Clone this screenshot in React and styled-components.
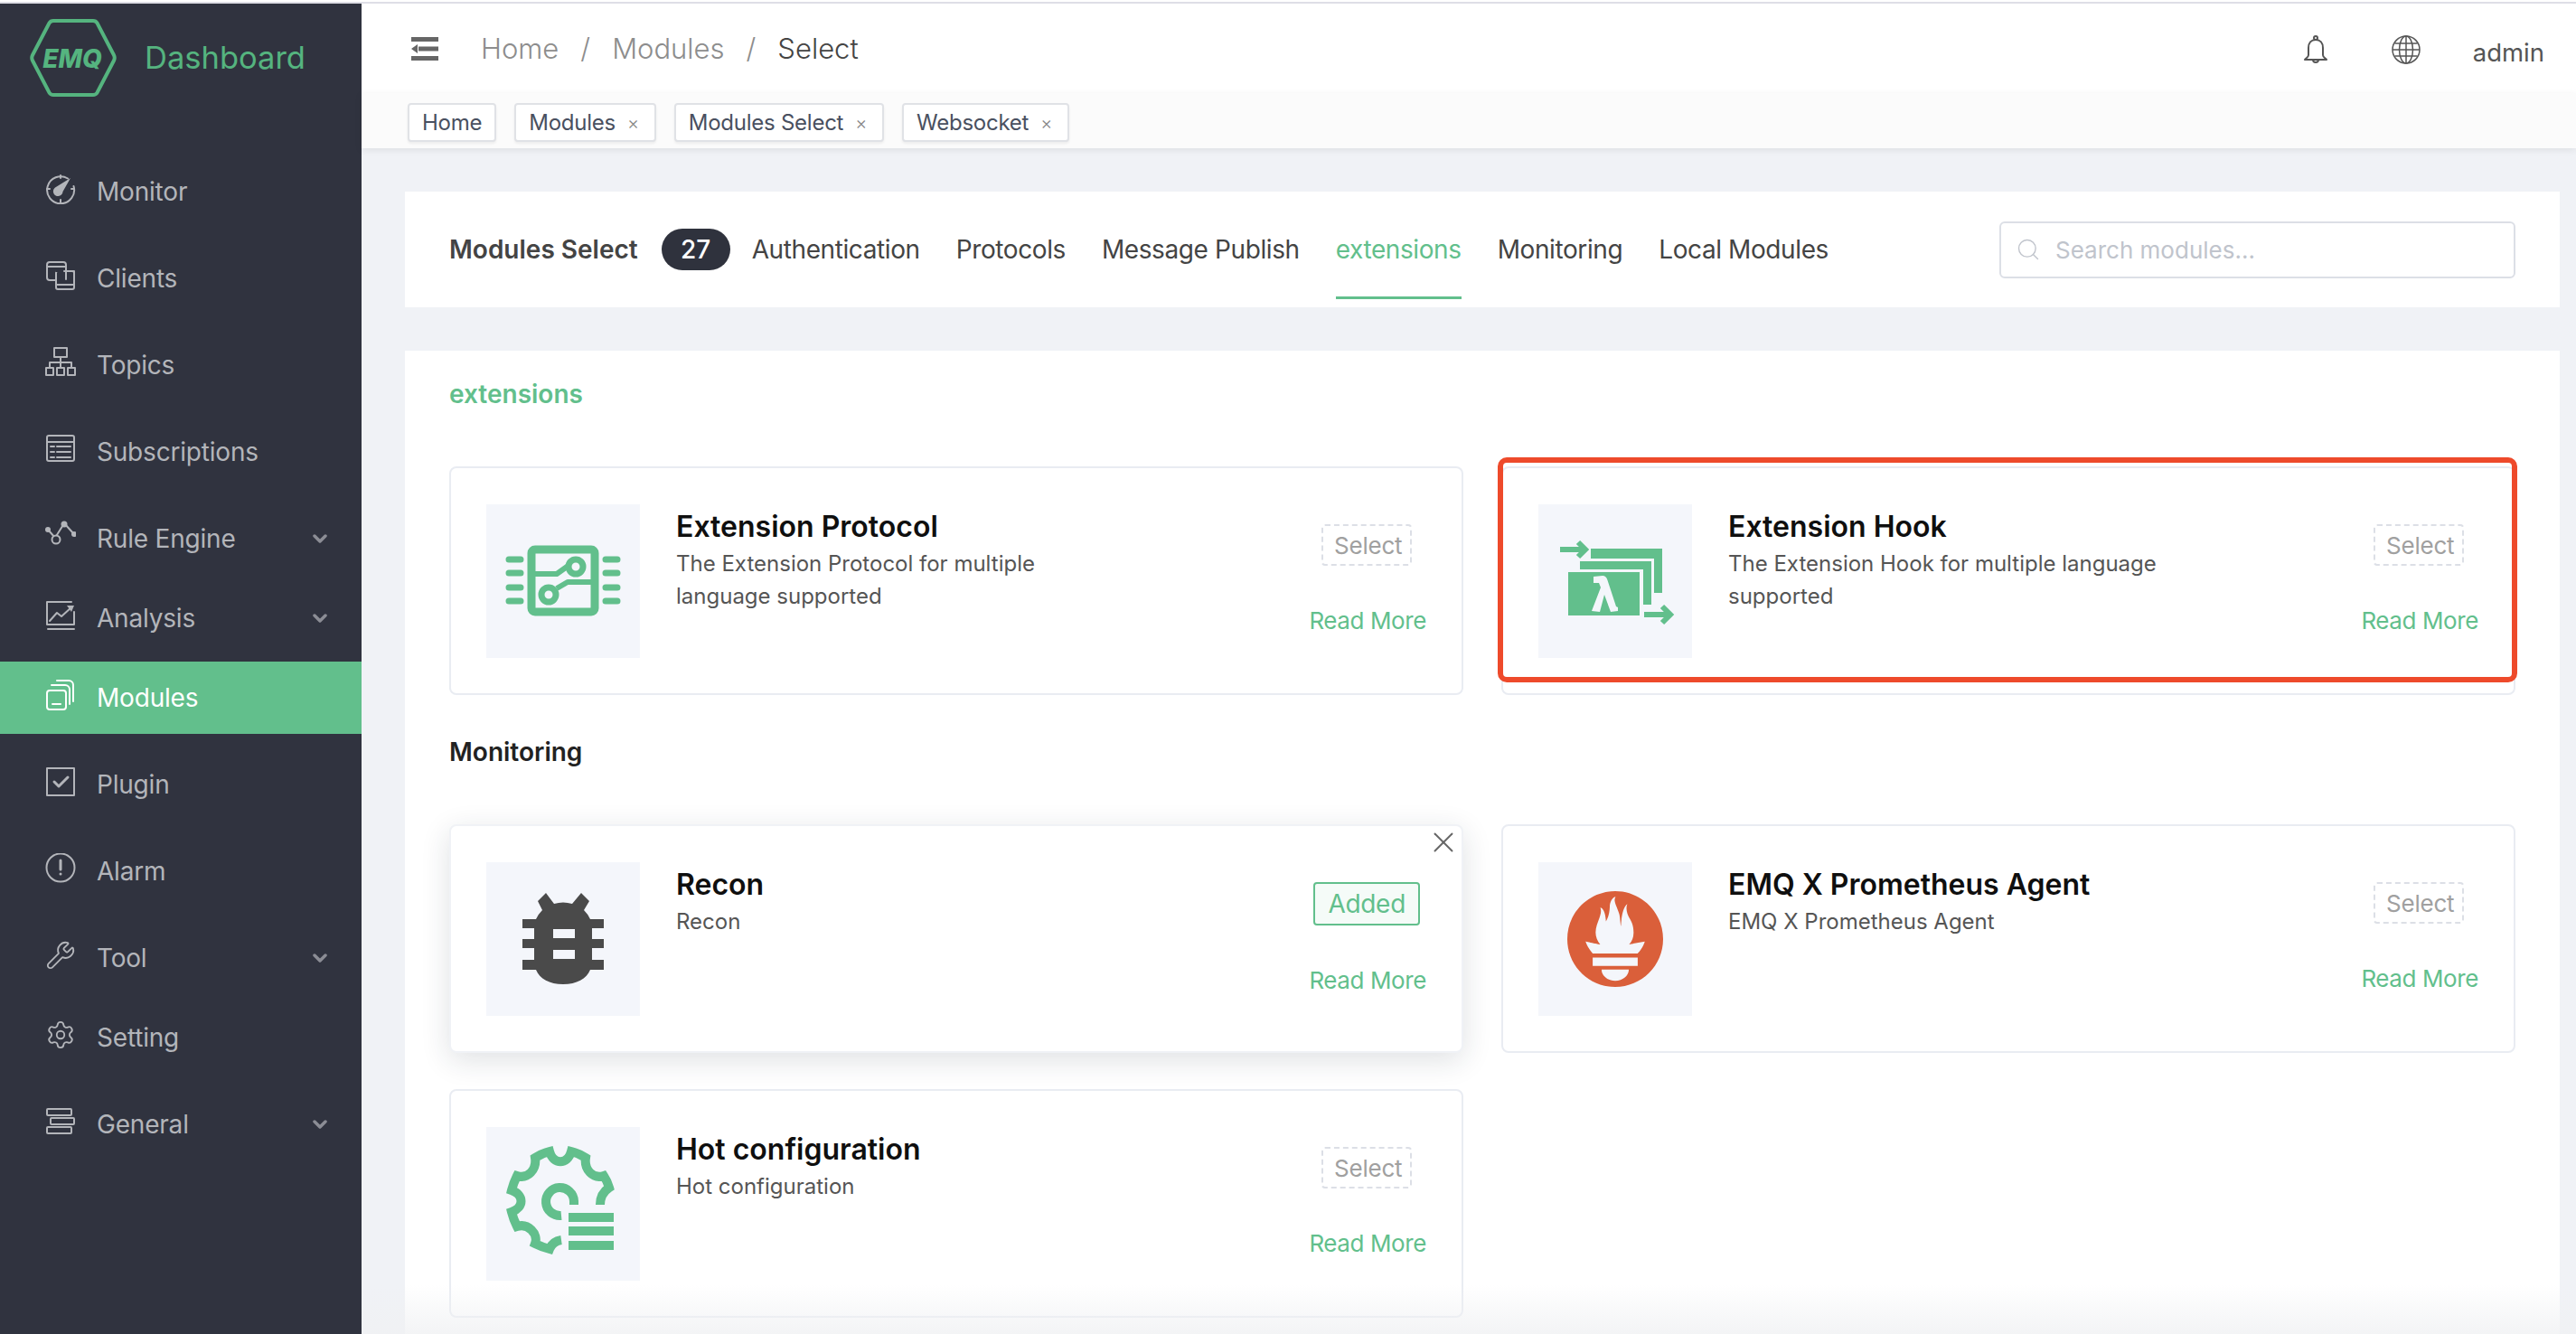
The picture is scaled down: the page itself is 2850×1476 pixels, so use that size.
import styled, { createGlobalStyle } from "styled-components";
import { X, Wrench, Settings, Search } from "lucide-react";
import { SiPrometheus } from "react-icons/si";

const GREEN = "#62bf8c";

const GlobalStyle = createGlobalStyle`
  html, body { margin: 0; padding: 0; background: #fff; }
  body { font-family: Inter, "Liberation Sans", sans-serif; }
  * { box-sizing: border-box; }
`;

/* ---------- sidebar icons ---------- */

const NavSvg = ({ children }) => (
  <svg width="34" height="34" viewBox="0 0 34 34" fill="none" stroke="currentColor" strokeWidth="2" strokeLinecap="round" strokeLinejoin="round">
    {children}
  </svg>
);

const MonitorIcon = () => (
  <NavSvg>
    <path d="M25 5.500A15 15 0 1 0 31.500 14" />
    <path d="M17 2v3M2 17h3M29 17h3M17 29v3" />
    <path d="M11 15.500 28 5l-8.500 15a5.300 5.300 0 1 1-8.500-4.500Z" fill="currentColor" stroke="none" />
  </NavSvg>
);
const ClientsIcon = () => (
  <NavSvg>
    <path d="M12 22H5a3 3 0 0 1-3-3V5a3 3 0 0 1 3-3h15a3 3 0 0 1 3 3v6" />
    <path d="M2 7h21" />
    <rect x="12" y="12" width="20" height="20" rx="2" />
    <path d="M12 27h20M23 11v10" />
    <path d="M12 12h9" stroke="#30333f" />
    <path d="M21 12h11v15M12 27V22" />
  </NavSvg>
);
const TopicsIcon = () => (
  <NavSvg>
    <rect x="10" y="1" width="14" height="10" />
    <path d="M17 11v6M5 23v-6h24v6M17 17v6" />
    <rect x="1" y="23" width="8" height="8" />
    <rect x="13" y="23" width="8" height="8" />
    <rect x="25" y="23" width="8" height="8" />
  </NavSvg>
);
const SubscriptionsIcon = () => (
  <NavSvg>
    <rect x="2" y="2" width="30" height="28" rx="2" />
    <path d="M2 9h30M6 14h4M13 14h15M6 20h4M13 20h15M6 26h4M13 26h15" />
  </NavSvg>
);
const RuleIcon = () => (
  <NavSvg>
    <path d="M3 10 11 19M11 19 21 3M21 3 32 15" />
    <circle cx="3" cy="10" r="3" fill="currentColor" stroke="none" />
    <circle cx="21" cy="4" r="3.500" fill="currentColor" stroke="none" />
    <circle cx="32" cy="15" r="3" fill="currentColor" stroke="none" />
    <circle cx="12" cy="21" r="4.500" fill="#30333f" />
  </NavSvg>
);
const AnalysisIcon = () => (
  <NavSvg>
    <path d="M2 27V2h27M32 13v14H2M3 32h29" />
    <path d="M5 23l8-9 5 4 11-10" />
    <path d="M24 6h8l-3 7Z" fill="currentColor" stroke="none" />
  </NavSvg>
);
const ModulesIcon = () => (
  <NavSvg>
    <rect x="2" y="12" width="21" height="21" rx="3" />
    <path d="M8 27h9M7 6h15a5 5 0 0 1 5 5v16M13 1h13a5 5 0 0 1 5 5v18" />
  </NavSvg>
);
const PluginIcon = () => (
  <NavSvg>
    <rect x="2" y="2" width="30" height="30" />
    <path d="M10 17l5 5 10-10" strokeWidth="3" />
  </NavSvg>
);
const AlarmIcon = () => (
  <NavSvg>
    <circle cx="17" cy="16" r="15.500" />
    <path d="M17 8v10" strokeWidth="3" />
    <circle cx="17" cy="23" r="1.500" fill="currentColor" stroke="none" />
  </NavSvg>
);
const GeneralIcon = () => (
  <NavSvg>
    <rect x="2" y="3" width="27" height="7" rx="1" />
    <rect x="6" y="13" width="26" height="7" rx="1" />
    <rect x="2" y="23" width="27" height="7" rx="1" />
  </NavSvg>
);
const ToolIcon = () => <Wrench size={34} strokeWidth={1.3} />;
const SettingIcon = () => <Settings size={34} strokeWidth={1.3} />;

const Chevron = () => (
  <svg width="16" height="10" viewBox="0 0 16 10" fill="none" stroke="#8b8d95" strokeWidth="3.500" strokeLinecap="round" strokeLinejoin="round">
    <path d="M2 2l6 6 6-6" />
  </svg>
);

/* ---------- header icons ---------- */

const BellIcon = () => (
  <svg width="28" height="32" viewBox="0 0 28 32" fill="none" stroke="#555" strokeWidth="2" strokeLinejoin="round">
    <circle cx="14" cy="3" r="2" />
    <path d="M14 5c-5 0-8 3.500-8 9v8c0 2-2 3-4 5h24c-2-2-4-3-4-5v-8c0-5.500-3-9-8-9Z" />
    <path d="M11 27a3 3 0 0 0 6 0" />
  </svg>
);

const GlobeIcon = () => (
  <svg width="32" height="32" viewBox="0 0 32 32" fill="none" stroke="#555" strokeWidth="1.500">
    <circle cx="16" cy="16" r="15" />
    <ellipse cx="16" cy="16" rx="7.500" ry="15" />
    <path d="M16 1v30M1 16h30M3.500 9h25M3.500 23h25" />
  </svg>
);

/* ---------- module icons, all on a 170 box ---------- */

const ChipIcon = () => (
  <svg width="170" height="170" viewBox="0 0 170 170" fill="none" stroke={GREEN} strokeLinecap="round" strokeLinejoin="round">
    <rect x="50" y="50" width="70" height="69" rx="4" strokeWidth="9" />
    <path d="M25 61h13M25 76h13M25 92h13M25 107h13M132 61h13M132 76h13M132 92h13M132 107h13" strokeWidth="7" />
    <path d="M50 77h28l14-10" strokeWidth="6" strokeLinecap="butt" />
    <path d="M78 93l12-7h30" strokeWidth="6" strokeLinecap="butt" />
    <circle cx="99" cy="69" r="8" strokeWidth="7" />
    <circle cx="69" cy="100" r="8" strokeWidth="7" />
  </svg>
);

const LambdaIcon = () => (
  <svg width="170" height="170" viewBox="0 0 170 170" fill="none">
    <path d="M58 49h79v49h-9V60H58Z" fill={GREEN} />
    <path d="M46 63h79v48h-9V72H46Z" fill={GREEN} />
    <path d="M33 75h79v48H33Z" fill={GREEN} />
    <path d="M61 80l10-1q4 0 5.500 5L86 113l2 1v4l-8 1-7-19-5 19-9-1 10-26-2-5h-6Z" fill="#f4f6fb" />
    <path d="M24 50h26M44 42l8 8-8 8" stroke={GREEN} strokeWidth="6" />
    <path d="M117 122h26M137 113l9 9-9 9" stroke={GREEN} strokeWidth="6" />
  </svg>
);

const BugIcon = () => (
  <svg width="170" height="170" viewBox="0 0 170 170">
    <path
      fillRule="evenodd"
      fill="#4a4a4a"
      d="M66 34l9 12q10-3 20 0l10-12 9 9-6 10q5 5 7 10h15v10h-13v12h13v10h-13v13h13v11h-15c-4 10-15 16-30 16s-26-6-30-16H40v-11h13V95H40V85h13V73H40V63h15q2-5 7-10l-5-10ZM74 74v10h24V74ZM74 97v10h24V97Z"
    />
  </svg>
);

const GearIcon = () => (
  <svg width="170" height="170" viewBox="0 0 170 170" fill="none" stroke={GREEN}>
    <path
      strokeWidth="10"
      d="M126 86C126 78 130 71 136 67Q134 60 130 54C118 58 108 47 110 34Q102 29 94 27C90 42 74 42 70 27Q62 29 54 34C56 47 46 58 34 54Q30 62 28 70C42 75 42 89 28 94Q30 102 34 110C46 106 58 118 54 129Q62 133 70 135C72 130 76 126 83 125"
    />
    <path strokeWidth="10" d="M83 98A15.500 15.500 0 1 1 97 82V86" />
    <path strokeWidth="10" d="M91 100h50M91 115h50M91 131h50" />
  </svg>
);

const PrometheusIcon = () => <SiPrometheus size={106} color="#da5f3a" />;

const HexLogo = () => (
  <svg width="96" height="88" viewBox="0 0 96 88" fill="none">
    <path d="M26 3h44q3 0 4.500 2.500L93 41q1.500 3 0 6L74.500 82.500Q73 85 70 85H26q-3 0-4.500-2.500L3 47q-1.500-3 0-6L21.500 5.500Q23 3 26 3Z" stroke="#55b47f" strokeWidth="4" />
    <text x="47" y="55" textAnchor="middle" fontFamily="Inter, sans-serif" fontSize="28" fontWeight="800" fontStyle="italic" fill="#55b47f">EMQ</text>
  </svg>
);

/* ---------- data ---------- */

const navItems = [
  { name: "Monitor", icon: MonitorIcon },
  { name: "Clients", icon: ClientsIcon },
  { name: "Topics", icon: TopicsIcon },
  { name: "Subscriptions", icon: SubscriptionsIcon },
  { name: "Rule Engine", icon: RuleIcon, sub: true },
  { name: "Analysis", icon: AnalysisIcon, sub: true },
  { name: "Modules", icon: ModulesIcon, active: true },
  { name: "Plugin", icon: PluginIcon },
  { name: "Alarm", icon: AlarmIcon },
  { name: "Tool", icon: ToolIcon, sub: true },
  { name: "Setting", icon: SettingIcon },
  { name: "General", icon: GeneralIcon, sub: true },
];

const tags = [
  { name: "Home" },
  { name: "Modules", close: true },
  { name: "Modules Select", close: true },
  { name: "Websocket", close: true },
];

const tabs = ["Authentication", "Protocols", "Message Publish", "extensions", "Monitoring", "Local Modules"];

function ModuleCard({ icon: Icon, title, desc, added, highlight, raised }) {
  return (
    <Card $raised={raised}>
      {highlight && <Highlight />}
      {raised && <CloseBtn><X size={38} strokeWidth={1.2} /></CloseBtn>}
      <IconBox><Icon /></IconBox>
      <Info>
        <CardTitle>{title}</CardTitle>
        <CardDesc>{desc}</CardDesc>
      </Info>
      <Actions>
        {added ? <AddedBtn>Added</AddedBtn> : <SelectBtn>Select</SelectBtn>}
        <ReadMore>Read More</ReadMore>
      </Actions>
    </Card>
  );
}

export default function App() {
  return (
    <Page>
      <GlobalStyle />
      <TopLine />
      <Shell>
        <Sidebar>
          <Brand>
            <HexLogo />
            <BrandName>Dashboard</BrandName>
          </Brand>
          <nav>
            {navItems.map((item) => (
              <NavItem key={item.name} $active={item.active} $sub={item.sub}>
                <NavIcon><item.icon /></NavIcon>
                <NavLabel>{item.name}</NavLabel>
                {item.sub && <Chevron />}
              </NavItem>
            ))}
          </nav>
        </Sidebar>
        <Main>
          <Header>
            <Burger viewBox="0 0 30 26" width="30" height="26">
              <path d="M0 0h30v5H0ZM0 21h30v5H0ZM8 10.500h22v5H8ZM0 13l7-5v10Z" fill="#666" />
            </Burger>
            <Crumb>Home</Crumb>
            <Slash>/</Slash>
            <Crumb>Modules</Crumb>
            <Slash>/</Slash>
            <Crumb $current>Select</Crumb>
            <HeaderRight>
              <BellIcon />
              <GlobeIcon />
              <AdminName>admin</AdminName>
            </HeaderRight>
          </Header>
          <TagsBar>
            {tags.map((tag) => (
              <Tag key={tag.name}>
                {tag.name}
                {tag.close && <TagClose>×</TagClose>}
              </Tag>
            ))}
          </TagsBar>
          <Content>
            <TabsPanel>
              <TabsHeading>Modules Select</TabsHeading>
              <CountBadge>27</CountBadge>
              {tabs.map((tab) => (
                <Tab key={tab} $active={tab === "extensions"}>{tab}</Tab>
              ))}
              <SearchBox>
                <Search size={28} strokeWidth={1.2} color="#c0c4cc" />
                <SearchInput placeholder="Search modules..." />
              </SearchBox>
            </TabsPanel>
            <ListPanel>
              <SectionTitle $green>extensions</SectionTitle>
              <CardGrid>
                <ModuleCard icon={ChipIcon} title="Extension Protocol" desc="The Extension Protocol for multiple language supported" />
                <ModuleCard icon={LambdaIcon} title="Extension Hook" desc="The Extension Hook for multiple language supported" highlight />
              </CardGrid>
              <SectionTitle>Monitoring</SectionTitle>
              <CardGrid>
                <ModuleCard icon={BugIcon} title="Recon" desc="Recon" added raised />
                <ModuleCard icon={PrometheusIcon} title="EMQ X Prometheus Agent" desc="EMQ X Prometheus Agent" />
                <ModuleCard icon={GearIcon} title="Hot configuration" desc="Hot configuration" />
              </CardGrid>
            </ListPanel>
          </Content>
          <BottomFade />
        </Main>
      </Shell>
    </Page>
  );
}

const Page = styled.div`
  width: 2850px;
  height: 1476px;
  overflow: hidden;
  padding-top: 2px;
`;

const TopLine = styled.div`
  height: 2px;
  background: #dedee6;
`;

const Shell = styled.div`
  display: flex;
  height: 1472px;
`;

const Sidebar = styled.aside`
  width: 400px;
  flex: none;
  background: #30333f;
`;

const Brand = styled.div`
  display: flex;
  align-items: center;
  height: 168px;
  padding: 0 0 49px 33px;
`;

const BrandName = styled.span`
  margin-left: 31px;
  font-size: 34.500px;
  color: #55b47f;
`;

const NavItem = styled.div`
  display: flex;
  align-items: center;
  height: 80px;
  margin-bottom: ${(p) => (p.$sub ? "8px" : "16px")};
  padding: 0 38px 0 50px;
  color: ${(p) => (p.$active ? "#fff" : "#b3b5ba")};
  background: ${(p) => (p.$active ? "#62bf8c" : "transparent")};
`;

const NavIcon = styled.span`
  display: flex;
  width: 57px;
  margin-bottom: 6px;
`;

const NavLabel = styled.span`
  flex: 1;
  font-size: 28px;
  letter-spacing: -0.2px;
`;

const Main = styled.main`
  position: relative;
  flex: 1;
  background: #f0f2f6;
`;

const Header = styled.header`
  display: flex;
  align-items: center;
  height: 99px;
  padding: 0 35px 0 55px;
  background: #fff;
`;

const Burger = styled.svg`
  margin-right: 47px;
`;

const Crumb = styled.span`
  font-size: 31px;
  font-weight: 300;
  color: ${(p) => (p.$current ? "#444" : "#8d8d8d")};
`;

const Slash = styled.span`
  margin: 0 24px;
  font-size: 31px;
  font-weight: 300;
  color: #8d8d8d;
`;

const HeaderRight = styled.div`
  display: flex;
  align-items: center;
  gap: 70px;
  margin: 2px 0 0 auto;
`;

const AdminName = styled.span`
  margin: 6px 0 0 -12px;
  font-size: 27.500px;
  color: #555;
`;

const TagsBar = styled.div`
  display: flex;
  gap: 20px;
  height: 61px;
  padding: 11px 0 0 51px;
  background: #fbfbfb;
  box-shadow: 0 2px 8px rgba(0, 0, 0, 0.08);
  position: relative;
`;

const Tag = styled.div`
  display: flex;
  align-items: center;
  height: 43px;
  padding: 0 14px;
  font-size: 24px;
  letter-spacing: -0.25px;
  color: #495060;
  background: #fff;
  border: 2px solid #e0e2e6;
  border-radius: 4px;
  box-shadow: 0 2px 3px rgba(0, 0, 0, 0.06);
`;

const TagClose = styled.span`
  margin: 0 3px 0 13px;
  font-size: 20px;
  font-weight: 300;
  color: #888;
`;

const Content = styled.div`
  display: flex;
  flex-direction: column;
  gap: 48px;
  padding: 48px 18px 0 48px;
`;

const TabsPanel = styled.section`
  display: flex;
  align-items: center;
  height: 128px;
  padding: 0 49px 0 49px;
  background: #fff;
`;

const TabsHeading = styled.span`
  font-size: 28px;
  font-weight: 600;
  color: #444;
`;

const CountBadge = styled.span`
  display: flex;
  align-items: center;
  justify-content: center;
  width: 76px;
  height: 46px;
  margin: 0 24px 0 26px;
  font-size: 28px;
  font-weight: 500;
  color: #fff;
  background: #2f323d;
  border-radius: 23px;
`;

const Tab = styled.div`
  margin-right: 40px;
  padding: 32px 0;
  font-size: 28px;
  letter-spacing: -0.4px;
  line-height: 40px;
  color: ${(p) => (p.$active ? GREEN : "#444")};
  border-top: 3px solid transparent;
  border-bottom: 3px solid ${(p) => (p.$active ? GREEN : "transparent")};
`;

const SearchBox = styled.div`
  display: flex;
  align-items: center;
  gap: 14px;
  width: 571px;
  height: 63px;
  margin-left: auto;
  padding: 0 16px;
  border: 2px solid #dcdfe6;
  border-radius: 6px;
`;

const SearchInput = styled.input`
  flex: 1;
  min-width: 0;
  border: 0;
  outline: 0;
  font: inherit;
  font-size: 26px;
  color: #444;
  &::placeholder {
    color: #c0c4cc;
    opacity: 1;
  }
`;

const ListPanel = styled.section`
  padding: 28px 49px 60px;
  background: #fff;
`;

const SectionTitle = styled.h3`
  margin: 0 0 60px;
  font-size: 28px;
  font-weight: 600;
  line-height: 40px;
  color: ${(p) => (p.$green ? GREEN : "#222")};
  & + div + & {
    margin-top: 43px;
  }
`;

const CardGrid = styled.div`
  display: grid;
  grid-template-columns: 1122px 1122px;
  gap: 40px 42px;
`;

const Card = styled.article`
  position: relative;
  display: flex;
  align-items: flex-start;
  height: 253px;
  padding: 40px 39px 39px;
  background: #fff;
  border: 2px solid ${(p) => (p.$raised ? "#f0f2f6" : "#e9ecf2")};
  border-radius: 8px;
  box-shadow: ${(p) => (p.$raised ? "0 8px 32px rgba(30, 40, 60, 0.14)" : "none")};
`;

const Highlight = styled.div`
  position: absolute;
  top: -12px;
  left: -6px;
  width: 1128px;
  height: 249px;
  border: 6px solid #ee4a2b;
  border-radius: 10px;
`;

const CloseBtn = styled.span`
  position: absolute;
  top: -1px;
  right: 1px;
  display: flex;
  color: #666;
`;

const IconBox = styled.div`
  display: flex;
  align-items: center;
  justify-content: center;
  width: 170px;
  height: 170px;
  flex: none;
  background: #f4f6fb;
`;

const Info = styled.div`
  flex: 1;
  margin-left: 40px;
  padding-top: 3px;
`;

const CardTitle = styled.h4`
  margin: 0;
  font-size: 32px;
  font-weight: 600;
  line-height: 44px;
  color: #0f0f0f;
`;

const CardDesc = styled.p`
  max-width: 485px;
  margin: 1px 0 0;
  font-size: 24px;
  line-height: 36px;
  color: #555;
`;

const Actions = styled.div`
  display: flex;
  flex-direction: column;
  align-items: center;
  padding-top: 22px;
`;

const SelectBtn = styled.div`
  display: flex;
  align-items: center;
  justify-content: center;
  width: 100px;
  height: 46px;
  margin-right: 2px;
  padding-left: 3px;
  font-size: 26px;
  letter-spacing: -0.2px;
  color: #a0a0a0;
  border: 2px dashed #dcdfe6;
  border-radius: 4px;
`;

const AddedBtn = styled.div`
  display: flex;
  align-items: center;
  justify-content: center;
  width: 118px;
  height: 48px;
  margin-right: 2px;
  font-size: 28px;
  letter-spacing: -0.3px;
  color: ${GREEN};
  background: #f5fbf8;
  border: 2px solid ${GREEN};
  border-radius: 4px;
`;

const ReadMore = styled.a`
  margin-top: 43px;
  font-size: 26px;
  letter-spacing: -0.4px;
  line-height: 36px;
  white-space: nowrap;
  color: ${GREEN};
`;

const BottomFade = styled.div`
  position: absolute;
  left: 0;
  right: 0;
  bottom: 0;
  height: 54px;
  pointer-events: none;
  background: linear-gradient(rgba(240, 241, 243, 0), rgba(240, 241, 243, 0.8));
`;
